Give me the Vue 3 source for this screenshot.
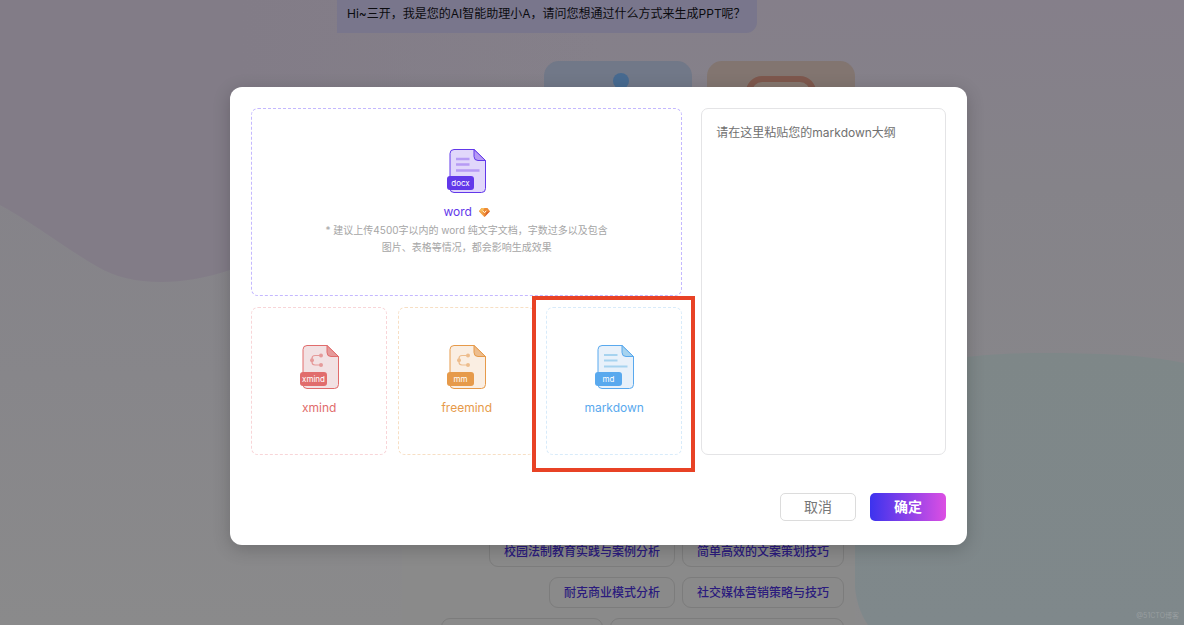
<script setup>
import { ref } from 'vue'

const outline = ref('')

const topics = [
  ['校园法制教育实践与案例分析', '简单高效的文案策划技巧'],
  ['耐克商业模式分析', '社交媒体营销策略与技巧']
]

const formats = [
  { id: 'word', label: 'word', badge: 'docx', glyph: 'lines', vip: true },
  { id: 'xmind', label: 'xmind', badge: 'xmind', glyph: 'tree' },
  { id: 'freemind', label: 'freemind', badge: 'mm', glyph: 'tree' },
  { id: 'markdown', label: 'markdown', badge: 'md', glyph: 'lines', marked: true }
]
</script>

<template>
  <div class="page">
    <svg class="backdrop" viewBox="0 0 1184 625" preserveAspectRatio="none" aria-hidden="true">
      <defs>
        <linearGradient id="blobPurple" x1="0" y1="0" x2="1" y2="0">
          <stop offset="0" stop-color="#827c87" />
          <stop offset="0.4" stop-color="#827c87" />
          <stop offset="1" stop-color="#827c87" stop-opacity="0" />
        </linearGradient>
        <linearGradient id="blobTeal" x1="0" y1="0" x2="0" y2="1">
          <stop offset="0" stop-color="#7e8788" />
          <stop offset="1" stop-color="#7f888b" />
        </linearGradient>
      </defs>
      <path d="M0 0H600V190C330 215 285 250 230 270C180 287 130 286 98 267C65 248 32 222 0 205Z" fill="url(#blobPurple)" />
      <path d="M855 400C900 362 970 353 1040 353C1100 353 1145 355 1184 363V625H868C861 615 857 604 855 588Z" fill="url(#blobTeal)" />
    </svg>

    <main class="chat">
      <p class="bubble">Hi~三开，我是您的AI智能助理小A，请问您想通过什么方式来生成PPT呢？</p>
      <div class="modes">
        <div class="mode mode-blue">
          <svg width="40" height="40" viewBox="0 0 40 40" aria-hidden="true">
            <circle cx="20" cy="8" r="8" fill="#476a90" />
            <path d="M20 14v22" stroke="#476a90" stroke-width="4" />
          </svg>
        </div>
        <div class="mode mode-orange">
          <svg width="70" height="50" viewBox="0 0 70 50" aria-hidden="true">
            <rect x="3" y="3" width="64" height="44" rx="13" fill="#85776f" stroke="#7e584d" stroke-width="6" />
          </svg>
        </div>
      </div>
      <section class="topics">
        <div v-for="(row, i) in topics" :key="i" class="topic-row">
          <button v-for="t in row" :key="t" type="button" class="topic">{{ t }}</button>
        </div>
        <div class="topic-row" aria-hidden="true">
          <span class="topic blank-short"></span>
          <span class="topic blank-long"></span>
        </div>
      </section>
    </main>

    <span class="watermark">@51CTO博客</span>

    <div class="overlay">
      <form class="modal" role="dialog" aria-label="PPT" @submit.prevent>
        <div class="content">
          <div class="formats">
            <button v-for="f in formats" :key="f.id" type="button" class="format" :class="f.id">
              <svg class="file" width="41" height="46" viewBox="0 0 41 46" aria-hidden="true">
                <path class="sheet" d="M8 1.5H28L39.5 12.5V40.5a4 4 0 0 1-4 4H8a4 4 0 0 1-4-4V5.5a4 4 0 0 1 4-4Z" />
                <path class="fold" d="M28 1.5V8.5a4 4 0 0 0 4 4H39.5Z" />
                <path v-if="f.glyph === 'lines'" class="rule" d="M10 11H23.5M10 16.5H23.5M10 22.5H33.5" />
                <g v-else class="tree">
                  <path d="M22 11.5H16a3 3 0 0 0-3 3V18a3 3 0 0 0 3 3H22" />
                  <circle cx="22" cy="11.5" r="2" />
                  <circle cx="22" cy="21" r="2" />
                  <circle cx="13" cy="16.3" r="2" />
                </g>
                <rect class="tag" x="1" y="28" width="27" height="14" rx="3" />
                <text class="tag-text" x="14.5" y="37.5" text-anchor="middle">{{ f.badge }}</text>
              </svg>
              <span class="name">
                {{ f.label }}
                <svg v-if="f.vip" width="11" height="9" viewBox="0 0 11 9" aria-hidden="true">
                  <path d="M2.5 0H8.5L11 3.2L5.5 9L0 3.2Z" fill="#ee8b35" />
                  <path d="M2.5 0H5.5L3.5 4L0 3.2Z" fill="#f7bd5c" />
                  <path d="M0 3.2L3.5 4L5.5 9Z" fill="#f3a94d" />
                  <path d="M5.5 9L7.5 4L11 3.2Z" fill="#d9632b" />
                  <path d="M3.8 2.7L5.5 4.8L7.2 2.7" fill="none" stroke="#fff3d8" />
                </svg>
              </span>
              <span v-if="f.vip" class="hint">* 建议上传4500字以内的 word 纯文字文档，字数过多以及包含<br />图片、表格等情况，都会影响生成效果</span>
              <span v-if="f.marked" class="marker"></span>
            </button>
          </div>
          <textarea v-model="outline" class="outline" aria-label="markdown" placeholder="请在这里粘贴您的markdown大纲"></textarea>
        </div>
        <div class="actions">
          <button type="button" class="btn cancel">取消</button>
          <button type="submit" class="btn confirm">确定</button>
        </div>
      </form>
    </div>
  </div>
</template>

<style>
body {
  background: #89898b;
}
</style>

<style scoped>
.page {
  position: relative;
  height: 100vh;
  overflow: hidden;
  box-sizing: border-box;
  background: linear-gradient(180deg, #857f8a 0%, #858389 30%, #87868a 60%, #8a8a8b 100%);
  font-family: Inter, "Noto Sans CJK SC", sans-serif;
  font-size: 12px;
}

button,
textarea {
  font-family: inherit;
  margin: 0;
  box-sizing: border-box;
}

.backdrop {
  position: absolute;
  inset: 0;
  width: 100%;
  height: 100%;
}

.chat {
  position: relative;
  display: flex;
  flex-direction: column;
  margin: 0 329px 0 337px;
}

.bubble {
  align-self: flex-start;
  margin: 0;
  padding: 5px 11px 10px 10px;
  line-height: 18px;
  white-space: nowrap;
  color: #0b0b0f;
  background: #79768c;
  border-radius: 0 0 11px 0;
}

.modes {
  display: flex;
  justify-content: flex-end;
  gap: 15px;
  margin-top: 28px;
}

.mode {
  display: flex;
  justify-content: center;
  box-sizing: border-box;
  width: 148px;
  height: 148px;
  padding-top: 12px;
  border-radius: 15px;
}

.mode svg {
  margin-left: 5px;
}

.mode-blue {
  background: #717888;
}

.mode-orange {
  padding-top: 15px;
  background: #827570;
}

.mode-orange svg {
  margin-left: 0;
}

.topics {
  display: flex;
  flex-direction: column;
  gap: 10px;
  margin: 306px 0 0 65px;
  padding: 21px 11px 0 0;
  background: #8a8a8a;
}

.topic-row {
  display: flex;
  justify-content: flex-end;
  gap: 7px;
}

.topic {
  box-sizing: border-box;
  height: 31px;
  padding: 0 14px;
  font-size: 12px;
  font-weight: 500;
  line-height: 16px;
  white-space: nowrap;
  color: #2b1b7d;
  background: transparent;
  border: 1px solid #7c7c7c;
  border-radius: 9px;
}

.blank-short {
  width: 162px;
}

.blank-long {
  width: 234px;
}

.watermark {
  position: absolute;
  right: 5px;
  bottom: 3px;
  font-size: 7px;
  line-height: 12px;
  color: #989ea0;
}

.overlay {
  position: absolute;
  inset: 0;
  padding: 87px 217px 80px 230px;
}

.modal {
  display: flex;
  flex-direction: column;
  box-sizing: border-box;
  padding: 21px 21px 24px;
  background: #fff;
  border-radius: 12px;
  box-shadow: 0 4px 18px rgba(0, 0, 0, 0.2);
}

.content {
  display: grid;
  grid-template-columns: 432fr 245fr;
  gap: 19px;
}

.formats {
  display: grid;
  grid-template-columns: repeat(3, 1fr);
  grid-template-rows: 188px 148px;
  gap: 11px;
}

.format {
  --c: #6238ea;
  --soft: #e1d7fb;
  --mid: #b69bf5;
  --line: #c4b8ff;
  position: relative;
  display: flex;
  flex-direction: column;
  align-items: center;
  justify-content: center;
  padding: 0;
  color: var(--c);
  background: #fff;
  border: 1px dashed var(--line);
  border-radius: 7px;
}

.word {
  grid-column: 1 / -1;
}

.xmind {
  --c: #e16c6c;
  --soft: #f2e1e3;
  --mid: #e59a9a;
  --line: #f8d5d8;
}

.freemind {
  --c: #e69a4a;
  --soft: #faeee2;
  --mid: #edbd8d;
  --line: #f7dfc4;
}

.markdown {
  --c: #59a9ee;
  --soft: #e8f1fa;
  --mid: #a6d3ef;
  --line: #d8ebfa;
}

.file {
  display: block;
}

.sheet {
  fill: var(--soft);
  stroke: var(--c);
}

.fold {
  fill: var(--mid);
  stroke: var(--c);
  stroke-linejoin: round;
}

.rule {
  fill: none;
  stroke: var(--mid);
  stroke-width: 2;
}

.word .rule {
  stroke-width: 2.5;
}

.tree path {
  fill: none;
  stroke: var(--mid);
  stroke-width: 1.2;
}

.tree circle {
  fill: var(--mid);
}

.tag {
  fill: var(--c);
}

.tag-text {
  fill: #fff;
  font-size: 8px;
}

.name {
  display: flex;
  align-items: center;
  gap: 7px;
  margin-top: 8px;
  font-size: 12px;
  line-height: 20px;
}

.hint {
  font-size: 10px;
  line-height: 17px;
  color: #a6a6a6;
}

.marker {
  position: absolute;
  inset: -12px -14px -18px -15px;
  border: 4px solid #e84225;
  pointer-events: none;
}

.outline {
  display: block;
  width: 100%;
  height: 100%;
  padding: 15px 14px;
  font-size: 12px;
  line-height: 18px;
  color: #333;
  background: #fff;
  border: 1px solid #e4e4e6;
  border-radius: 7px;
  outline: none;
  resize: none;
}

.outline::placeholder {
  color: #707070;
  opacity: 1;
}

.actions {
  display: flex;
  justify-content: flex-end;
  gap: 14px;
  margin-top: 38px;
}

.btn {
  width: 76px;
  height: 28px;
  padding: 0;
  font-size: 14px;
  line-height: 20px;
  border-radius: 5px;
}

.cancel {
  color: #777;
  background: #fff;
  border: 1px solid #dcdcdc;
}

.confirm {
  font-weight: 700;
  color: #fff;
  background: linear-gradient(90deg, #3c33ee, #dc4fe3);
  border: 0;
}
</style>
